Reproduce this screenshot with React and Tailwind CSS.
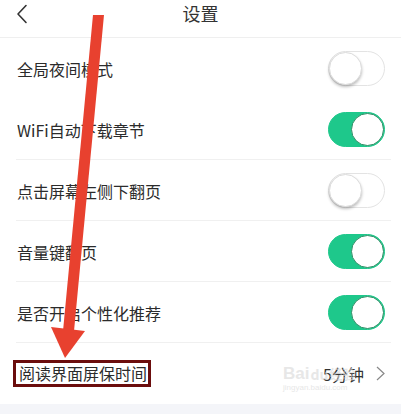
import React, { useState } from "react";

const font = { fontFamily: '"Noto Sans CJK SC", "Noto Sans", sans-serif' };

function Toggle({ on, onChange }) {
  return (
    <button
      onClick={onChange}
      className={`relative w-[57px] h-[35px] rounded-full border transition-colors ${
        on ? "bg-[#1ec88b] border-[#1ec88b]" : "bg-white border-[#e3e3e3]"
      }`}
    >
      <span
        className={`absolute top-[0px] w-[33px] h-[33px] rounded-full bg-white ${
          on
            ? "right-[0px] border border-[#2f8f66]"
            : "left-[0px] border border-[#dcdcdc] shadow-[0_2px_3px_rgba(0,0,0,0.25)]"
        }`}
      />
    </button>
  );
}

function Row({ label, on, onChange, divider }) {
  return (
    <div className="relative h-[61px] flex items-center justify-between pl-[17px] pr-[16px]">
      <span className="text-[16px] text-[#2b2b2b]">{label}</span>
      <Toggle on={on} onChange={onChange} />
      {divider && <div className="absolute bottom-0 left-[16px] right-[10px] h-px bg-[#f0f0f0]" />}
    </div>
  );
}

export default function App() {
  const [opts, setOpts] = useState([
    { label: "全局夜间模式", on: false, divider: false },
    { label: "WiFi自动下载章节", on: true, divider: true },
    { label: "点击屏幕左侧下翻页", on: false, divider: true },
    { label: "音量键翻页", on: true, divider: true },
    { label: "是否开启个性化推荐", on: true, divider: true },
  ]);

  const flip = (i) =>
    setOpts((list) => list.map((o, j) => (j === i ? { ...o, on: !o.on } : o)));

  return (
    <div className="relative w-[401px] h-[416px] bg-white overflow-hidden" style={font}>
      {/* --- Top bar --- */}
      <div className="relative h-[38px] flex items-center justify-center border-b border-[#efefef]">
        <button className="absolute left-[15px] top-[4px]">
          <svg width="14" height="20" viewBox="0 0 14 20" fill="none">
            <path d="M11 1.5 L3 10 L11 18.5" stroke="#333" strokeWidth="1.6" strokeLinecap="round" strokeLinejoin="round" />
          </svg>
        </button>
        <h1 className="text-[18px] text-[#333] -mt-[12px] leading-none">设置</h1>
      </div>

      {/* --- Switch rows --- */}
      {opts.map((o, i) => (
        <Row key={o.label} {...o} onChange={() => flip(i)} />
      ))}

      {/* --- Screensaver time --- */}
      <div className="relative h-[61px] flex items-center justify-between pl-[13px] pr-[16px]">
        <span className="text-[16px] leading-[21px] text-[#2b2b2b] border-[3px] border-[#6b0d0d] pl-[3px] pr-px">
          阅读界面屏保时间
        </span>
        <div className="flex items-center gap-[12px]">
          <span className="text-[16px] text-[#333]">5分钟</span>
          <svg width="9" height="15" viewBox="0 0 9 15" fill="none">
            <path d="M1 1 L8 7.5 L1 14" stroke="#888" strokeWidth="1.2" />
          </svg>
        </div>

        {/* watermark */}
        <div className="absolute left-[283px] top-[22px] flex flex-col items-start pointer-events-none opacity-60">
          <div className="flex items-center text-[#d8d8d8] leading-none">
            <span className="text-[17px] font-bold" style={{ fontFamily: '"Liberation Sans", sans-serif' }}>Bai</span>
            <span className="text-[14px] font-bold mx-[1px]">du</span>
            <span className="text-[13px] font-bold">经验</span>
          </div>
          <span className="text-[8px] text-[#d8d8d8] leading-none mt-[2px]" style={{ fontFamily: '"Liberation Sans", sans-serif' }}>
            jingyan.baidu.com
          </span>
        </div>
      </div>

      <div className="h-[10px] bg-[#f4f5f9]" />

      {/* pointer arrow */}
      <svg className="absolute inset-0 pointer-events-none" width="401" height="416" viewBox="0 0 401 416">
        <polygon points="93,15 104,15 74,331 63,331" fill="#e8412f" />
        <polygon points="51,327 85,331 65,358" fill="#e8412f" />
      </svg>
    </div>
  );
}
